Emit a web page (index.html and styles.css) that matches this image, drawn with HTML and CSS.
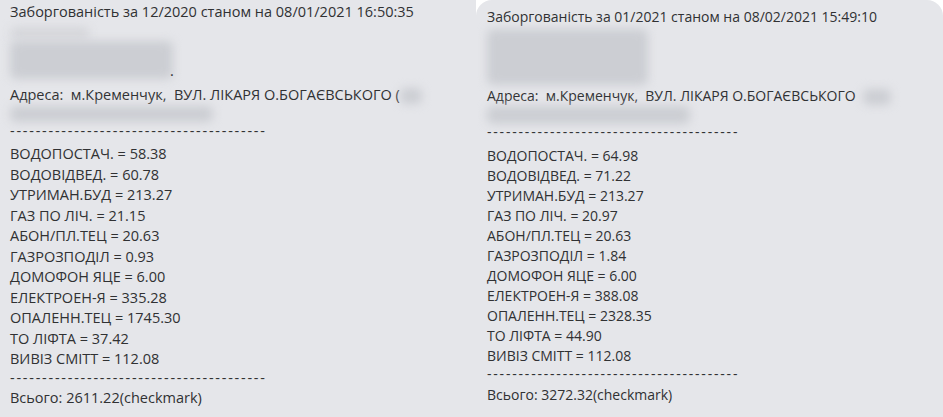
FILE: index.html
```html
<!DOCTYPE html>
<html lang="uk">
<head>
<meta charset="utf-8">
<title>Заборгованість</title>
<link rel="stylesheet" href="styles.css">
</head>
<body>
<main class="screen">
  <section class="bubble bubble-left">
    <p class="line title">Заборгованість за 12/2020 станом на 08/01/2021 16:50:35</p>
    <div class="redact redact-l">
      <span class="blot blot-l1"></span>
      <span class="blot blot-l2"></span>
      <span class="dot">.</span>
    </div>
    <p class="line addr">Адреса:  м.Кременчук,  ВУЛ. ЛІКАРЯ О.БОГАЄВСЬКОГО (<span class="blot blot-inline blot-l3"></span></p>
    <div class="redact-line"><span class="blot blot-l4"></span></div>
    <p class="line dashes">----------------------------------------</p>
    <ul class="items">
      <li class="line">ВОДОПОСТАЧ. = 58.38</li>
      <li class="line">ВОДОВІДВЕД. = 60.78</li>
      <li class="line">УТРИМАН.БУД = 213.27</li>
      <li class="line">ГАЗ ПО ЛІЧ. = 21.15</li>
      <li class="line">АБОН/ПЛ.ТЕЦ = 20.63</li>
      <li class="line">ГАЗРОЗПОДІЛ = 0.93</li>
      <li class="line">ДОМОФОН ЯЦЕ = 6.00</li>
      <li class="line">ЕЛЕКТРОЕН-Я = 335.28</li>
      <li class="line">ОПАЛЕНН.ТЕЦ = 1745.30</li>
      <li class="line">ТО ЛІФТА = 37.42</li>
      <li class="line">ВИВІЗ СМІТТ = 112.08</li>
    </ul>
    <p class="line dashes">----------------------------------------</p>
    <p class="line total">Всього: 2611.22(checkmark)</p>
  </section>
  <section class="bubble bubble-right">
    <p class="line title">Заборгованість за 01/2021 станом на 08/02/2021 15:49:10</p>
    <div class="redact redact-r">
      <span class="blot blot-r1"></span>
    </div>
    <p class="line addr">Адреса:  м.Кременчук,  ВУЛ. ЛІКАРЯ О.БОГАЄВСЬКОГО <span class="blot blot-inline blot-r3"></span></p>
    <div class="redact-line"><span class="blot blot-r4"></span></div>
    <p class="line dashes">----------------------------------------</p>
    <ul class="items">
      <li class="line">ВОДОПОСТАЧ. = 64.98</li>
      <li class="line">ВОДОВІДВЕД. = 71.22</li>
      <li class="line">УТРИМАН.БУД = 213.27</li>
      <li class="line">ГАЗ ПО ЛІЧ. = 20.97</li>
      <li class="line">АБОН/ПЛ.ТЕЦ = 20.63</li>
      <li class="line">ГАЗРОЗПОДІЛ = 1.84</li>
      <li class="line">ДОМОФОН ЯЦЕ = 6.00</li>
      <li class="line">ЕЛЕКТРОЕН-Я = 388.08</li>
      <li class="line">ОПАЛЕНН.ТЕЦ = 2328.35</li>
      <li class="line">ТО ЛІФТА = 44.90</li>
      <li class="line">ВИВІЗ СМІТТ = 112.08</li>
    </ul>
    <p class="line dashes">----------------------------------------</p>
    <p class="line total">Всього: 3272.32(checkmark)</p>
  </section>
</main>
</body>
</html>
```
FILE: styles.css
```css
* { box-sizing: border-box; }
html, body { margin: 0; padding: 0; }
body {
  background: #ffffff;
  width: 943px;
  height: 417px;
  overflow: hidden;
  font-family: "Open Sans", "Noto Sans", sans-serif;
  color: #303133;
}
.screen {
  display: flex;
  width: 943px;
  height: 417px;
}
.bubble {
  background: #e5e6ea;
  height: 417px;
  overflow: hidden;
}
.bubble-left {
  width: 476px;
  padding: 2px 0 0 10px;
  font-size: 14.5px;
}
.bubble-right {
  flex: 1;
  padding: 7px 0 0 11px;
  border-radius: 16px 16px 0 0;
  font-size: 14px;
}
p, ul { margin: 0; padding: 0; list-style: none; }
.line {
  white-space: pre;
  line-height: 20px;
}
.bubble-left .items .line { line-height: 20.5px; }

.redact { position: relative; display: flow-root; }
.redact-l { height: 63px; }
.redact-r { height: 59px; }
.redact-line { height: 18px; display: flow-root; }

.blot {
  display: block;
  background: #ccced3;
  filter: blur(5px);
  border-radius: 6px;
}
.blot-inline {
  display: inline-block;
  vertical-align: middle;
}
.blot-l1 { width: 80px; height: 12px; margin-top: 5px; background: #d5d6da; }
.blot-l2 { width: 163px; height: 38px; margin-top: 2px; }
.dot { position: absolute; left: 160px; top: 44px; line-height: 10px; }
.blot-l3 { width: 22px; height: 16px; }
.blot-l4 { width: 203px; height: 16px; margin-top: 1px; }
.blot-r1 { width: 161px; height: 56px; margin-top: 2px; }
.blot-r3 { width: 28px; height: 16px; margin-left: 4px; }
.blot-r4 { width: 203px; height: 18px; }

.dashes {
  line-height: 16px;
  letter-spacing: 1.75px;
}
.bubble-right .dashes { letter-spacing: 1.8px; }
.items { margin-top: 5px; }
.bubble-right .items { margin-top: 6px; }
.total { margin-top: 2px; }
.bubble-right .total { margin-top: 3px; }
```
